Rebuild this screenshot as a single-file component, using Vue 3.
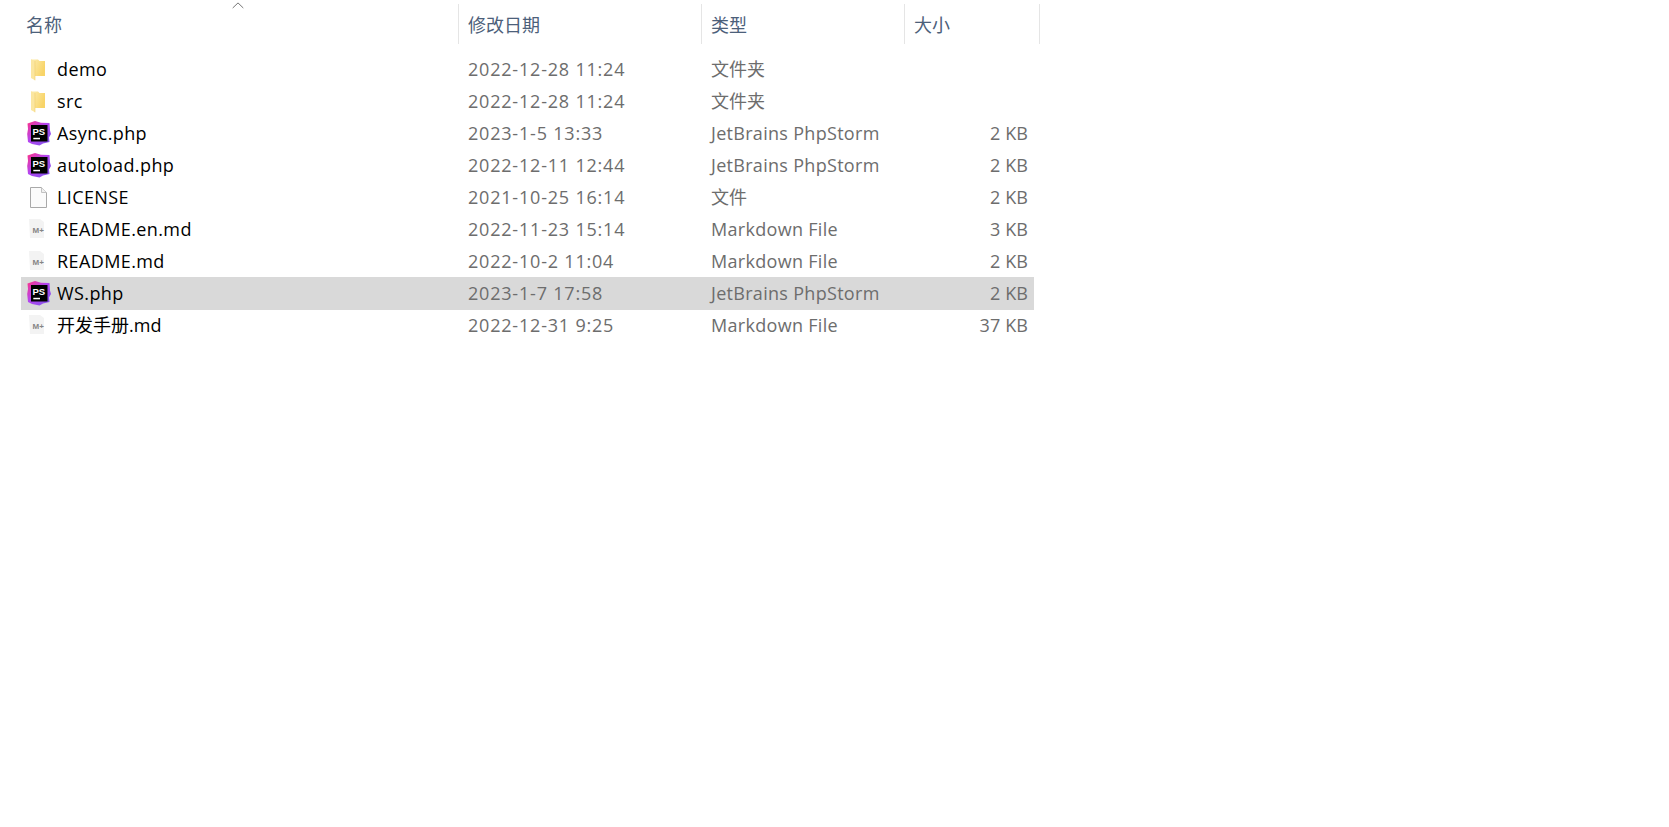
<template>
  <div class="explorer">
    <div class="head">
      <span class="sort-arrow">
        <svg width="12" height="7" viewBox="0 0 12 7"><path d="M.7 6 6 .9 11.3 6" fill="none" stroke="#757575" stroke-width="1" /></svg>
      </span>
      <div v-for="c in columns" :key="c" class="head-cell">{{ c }}</div>
    </div>
    <div class="list">
      <div v-for="f in files" :key="f.name" :class="['row', { selected: f.selected }]">
        <div class="name-cell">
          <span class="icon">
            <svg v-if="f.kind === 'folder'" width="24" height="24" viewBox="0 0 24 24">
              <defs>
                <linearGradient id="fold" x1="0" y1="0" x2="1" y2="0.4">
                  <stop offset="0" stop-color="#fdeeb4" />
                  <stop offset="1" stop-color="#f8d468" />
                </linearGradient>
              </defs>
              <path d="M5 2.500h7l1.500 1.500H19v15H5z" fill="url(#fold)" />
              <path d="M5 2.300 9 4v19.300l-4-2.300z" fill="#fbe6a0" />
              <path d="M9 4v19.300" stroke="#f0cd6c" stroke-width=".6" />
            </svg>
            <svg v-else-if="f.kind === 'ps'" width="26" height="26" viewBox="0 0 26 26">
              <defs>
                <linearGradient id="psg" x1="0" y1="0" x2="1" y2="1">
                  <stop offset="0" stop-color="#ff3184" />
                  <stop offset=".45" stop-color="#b345f1" />
                  <stop offset="1" stop-color="#7a55e8" />
                </linearGradient>
              </defs>
              <path d="M1.500 3.500 9 1l6 1.800L23.500 3l.5 7.500L25 14l-2 3.500.500 4.500-6.500 1.500-3.500 2L6 24 2 22l-.800-8L2 9z" fill="url(#psg)" />
              <rect x="5" y="5" width="16.500" height="16.500" fill="#000" />
              <text x="6.500" y="14.500" class="ps-text">PS</text>
              <rect x="7.300" y="17.800" width="6.700" height="1.500" fill="#fff" />
            </svg>
            <svg v-else-if="f.kind === 'doc'" width="24" height="24" viewBox="0 0 24 24">
              <path d="M4.500 2.500h11l5 5v15h-16z" fill="#fbfbfb" stroke="#a9a9a9" />
              <path d="M15.500 2.500v5h5" fill="#f0f0f0" stroke="#c2c2c2" />
            </svg>
            <svg v-else width="24" height="24" viewBox="0 0 24 24">
              <path d="M3 2h11l4 3v16H4z" fill="#f3f3f3" />
              <text x="6.500" y="15.500" class="md-text">M+</text>
            </svg>
          </span>
          <span :class="['name', { latin: isLatin(f.name) }]">{{ f.name }}</span>
        </div>
        <div class="cell date">{{ f.date }}</div>
        <div :class="['cell', { 'latin-type': isLatin(f.type) }]">{{ f.type }}</div>
        <div class="cell size">{{ f.size }}</div>
      </div>
    </div>
  </div>
</template>

<script setup>
const columns = ['名称', '修改日期', '类型', '大小']

const files = [
  { name: 'demo', kind: 'folder', date: '2022-12-28 11:24', type: '文件夹', size: '' },
  { name: 'src', kind: 'folder', date: '2022-12-28 11:24', type: '文件夹', size: '' },
  { name: 'Async.php', kind: 'ps', date: '2023-1-5 13:33', type: 'JetBrains PhpStorm', size: '2 KB' },
  { name: 'autoload.php', kind: 'ps', date: '2022-12-11 12:44', type: 'JetBrains PhpStorm', size: '2 KB' },
  { name: 'LICENSE', kind: 'doc', date: '2021-10-25 16:14', type: '文件', size: '2 KB' },
  { name: 'README.en.md', kind: 'md', date: '2022-11-23 15:14', type: 'Markdown File', size: '3 KB' },
  { name: 'README.md', kind: 'md', date: '2022-10-2 11:04', type: 'Markdown File', size: '2 KB' },
  { name: 'WS.php', kind: 'ps', date: '2023-1-7 17:58', type: 'JetBrains PhpStorm', size: '2 KB', selected: true },
  { name: '开发手册.md', kind: 'md', date: '2022-12-31 9:25', type: 'Markdown File', size: '37 KB' },
]

function isLatin(text) {
  return /^[\x00-\x7f]+$/.test(text)
}
</script>

<style>
html, body { background: #fff; }
</style>

<style scoped>
.explorer {
  width: 1669px;
  height: 827px;
  overflow: hidden;
  padding-top: 4px;
  box-sizing: border-box;
  font-family: "Open Sans", "Noto Sans CJK SC", sans-serif;
  font-size: 18px;
  position: relative;
}

.head {
  display: grid;
  grid-template-columns: 459px 243px 203px 135px;
  height: 40px;
}

.head-cell {
  color: #4c607a;
  padding: 2px 0 0 9px;
  line-height: 38px;
  border-right: 1px solid #e5e5e5;
  box-sizing: border-box;
}

.head-cell:first-of-type { padding-left: 26px; }

.sort-arrow {
  position: absolute;
  left: 232px;
  top: 2px;
  line-height: 0;
}

.list {
  margin-top: 9px;
  margin-left: 21px;
  width: 1013px;
}

.row {
  display: grid;
  grid-template-columns: 438px 243px 203px 129px;
  height: 32px;
  line-height: 32px;
  color: #6d6d6d;
}

.row.selected {
  background: #d9d9d9;
  box-shadow: 0 1px 0 #d9d9d9;
}

.name-cell {
  display: flex;
  align-items: center;
}

.icon {
  width: 36px;
  height: 32px;
  padding-left: 5px;
  box-sizing: border-box;
  display: flex;
  align-items: center;
  flex-shrink: 0;
}

.name { color: #000; }
.name.latin { letter-spacing: 0.4px; }

.cell { padding-left: 9px; }
.date { letter-spacing: 0.8px; }
.latin-type { letter-spacing: 0.3px; }

.size {
  text-align: right;
  padding-right: 6px;
  letter-spacing: 0.1px;
}

.ps-text {
  font-family: "Liberation Sans", sans-serif;
  font-size: 9.500px;
  font-weight: 700;
  fill: #fff;
}

.md-text {
  font-family: "Liberation Sans", sans-serif;
  font-size: 8px;
  font-weight: 700;
  fill: #858585;
}
</style>
